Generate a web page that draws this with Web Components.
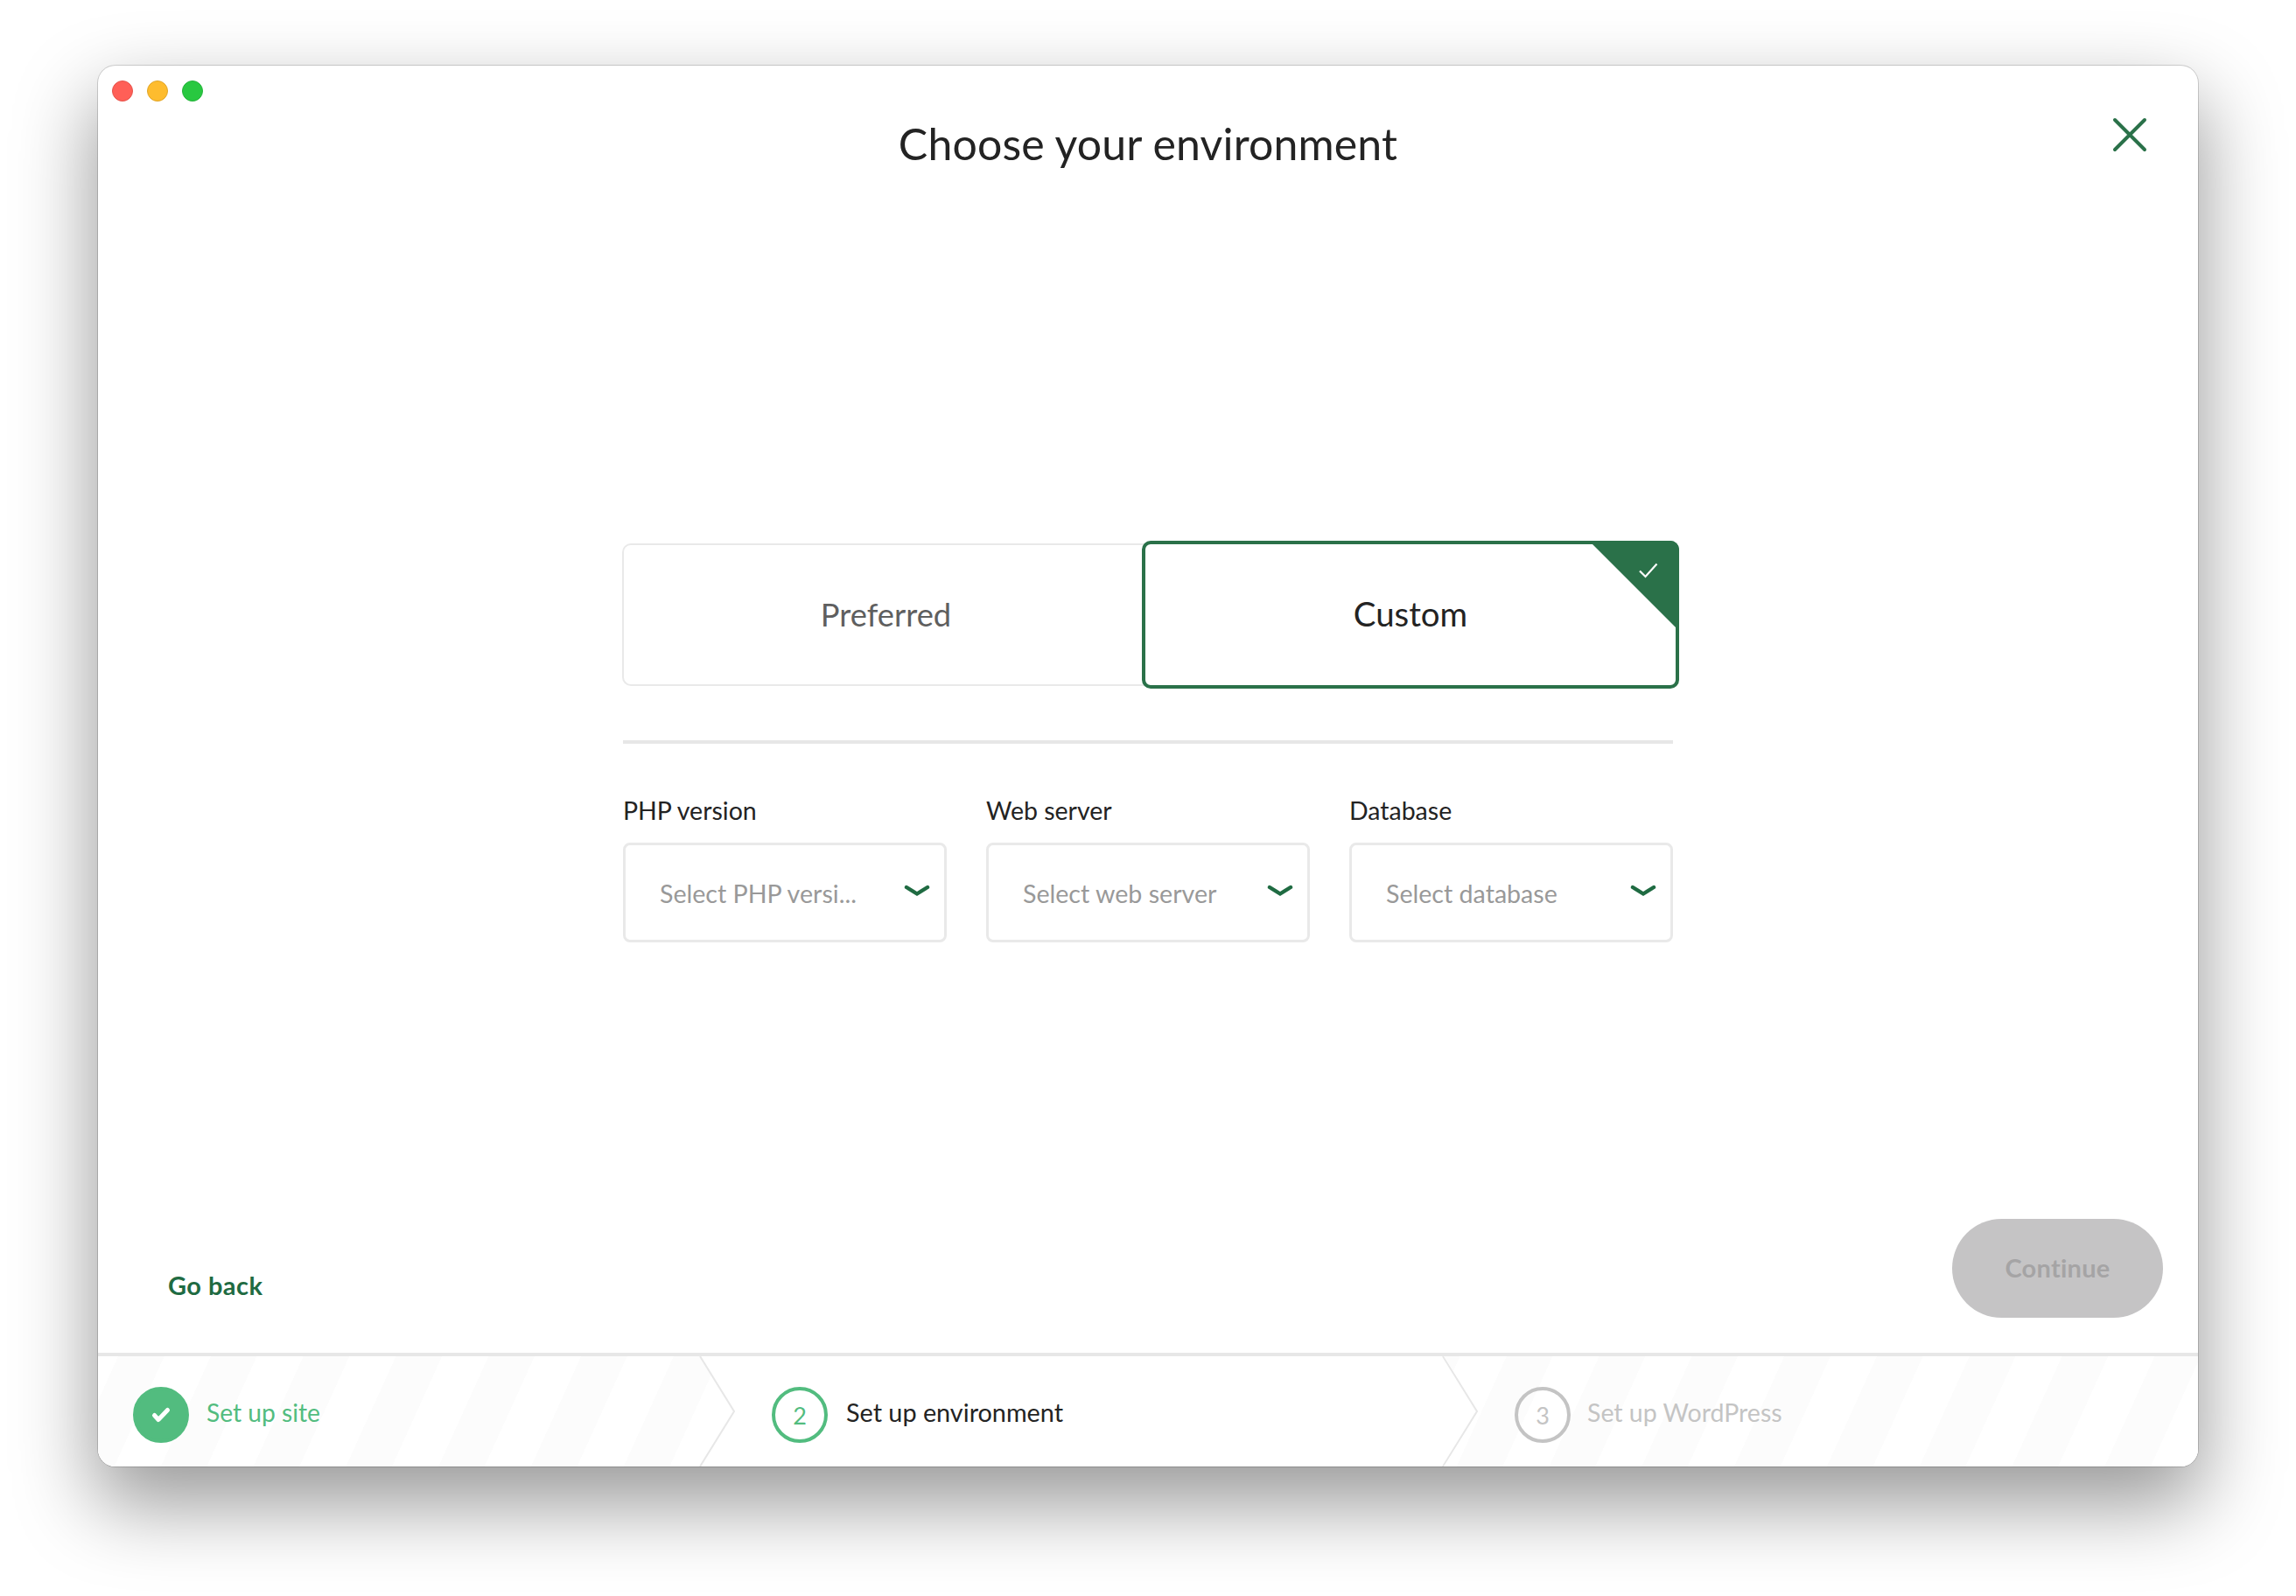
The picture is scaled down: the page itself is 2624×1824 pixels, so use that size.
<!DOCTYPE html>
<html lang="en">
<head>
<meta charset="utf-8">
<title>Choose your environment</title>
<style>
    html, body { margin: 0; padding: 0; background: #ffffff; }
    body { font-family: "Lato", "Liberation Sans", sans-serif; padding: 75px 112px 0; height: 1749px; }
</style>
</head>
<body>
<app-window>
    <traffic-lights></traffic-lights>
    <env-header>Choose your environment</env-header>
    <env-panel>
        <env-tabs>
            <env-tab>Preferred</env-tab>
            <env-tab selected>Custom</env-tab>
        </env-tabs>
        <env-fields>
            <select-field label="PHP version" placeholder="Select PHP versi..."></select-field>
            <select-field label="Web server" placeholder="Select web server"></select-field>
            <select-field label="Database" placeholder="Select database"></select-field>
        </env-fields>
    </env-panel>
    <action-row></action-row>
    <wizard-footer>
        <wizard-step state="done" width="729">Set up site</wizard-step>
        <wizard-step state="current" number="2" width="849">Set up environment</wizard-step>
        <wizard-step state="todo" number="3">Set up WordPress</wizard-step>
    </wizard-footer>
</app-window>

<script>
class AppWindow extends HTMLElement {
    constructor() {
        super();
        this.attachShadow({ mode: 'open' });
        this.shadowRoot.innerHTML = `
            <style>
                :host {
                    display: flex;
                    flex-direction: column;
                    position: relative;
                    width: 2400px;
                    height: 1601px;
                    background: #ffffff;
                    border-radius: 20px;
                    overflow: hidden;
                    box-shadow: 0 0 0 1px rgba(0, 0, 0, 0.16), 0 40px 90px 4px rgba(0, 0, 0, 0.4);
                }
            </style>
            <slot></slot>
        `;
    }
}

class TrafficLights extends HTMLElement {
    constructor() {
        super();
        this.attachShadow({ mode: 'open' });
        this.shadowRoot.innerHTML = `
            <style>
                :host {
                    position: absolute;
                    top: 17px;
                    left: 16px;
                    display: flex;
                    gap: 16px;
                }
                span {
                    width: 24px;
                    height: 24px;
                    border-radius: 50%;
                    box-sizing: border-box;
                }
                .red { background: #ff5f57; border: 1px solid #e5534b; }
                .amber { background: #febc2e; border: 1px solid #e0a528; }
                .green { background: #28c840; border: 1px solid #24b23a; }
            </style>
            <span class="red"></span>
            <span class="amber"></span>
            <span class="green"></span>
        `;
    }
}

class EnvHeader extends HTMLElement {
    constructor() {
        super();
        this.attachShadow({ mode: 'open' });
        this.shadowRoot.innerHTML = `
            <style>
                :host {
                    display: flex;
                    justify-content: center;
                    align-items: center;
                    position: relative;
                    height: 178px;
                    flex: none;
                    font-size: 50px;
                    letter-spacing: 0.15px;
                    color: #232323;
                }
                svg {
                    position: absolute;
                    top: 59px;
                    right: 58px;
                }
            </style>
            <slot></slot>
            <svg width="40" height="40" viewBox="0 0 40 40" fill="none" stroke="#2a7149" stroke-width="4" stroke-linecap="round">
                <path d="M3 3 L37 37 M37 3 L3 37"/>
            </svg>
        `;
    }
}

class EnvPanel extends HTMLElement {
    constructor() {
        super();
        this.attachShadow({ mode: 'open' });
        this.shadowRoot.innerHTML = `
            <style>
                :host {
                    display: block;
                    width: 1200px;
                    margin: 365px auto 0;
                    flex: none;
                }
            </style>
            <slot></slot>
        `;
    }
}

class EnvTabs extends HTMLElement {
    constructor() {
        super();
        this.attachShadow({ mode: 'open' });
        this.shadowRoot.innerHTML = `
            <style>
                :host {
                    display: flex;
                    width: 1207px;
                    height: 169px;
                    padding-bottom: 59px;
                    position: relative;
                }
                .rule {
                    position: absolute;
                    left: 0;
                    bottom: -4px;
                    width: 1200px;
                    height: 4px;
                    background: #e7e7e7;
                }
            </style>
            <slot></slot>
            <div class="rule"></div>
        `;
    }
}

class EnvTab extends HTMLElement {
    constructor() {
        super();
        this.attachShadow({ mode: 'open' });
        this.shadowRoot.innerHTML = `
            <style>
                :host {
                    display: flex;
                    justify-content: center;
                    align-items: center;
                    box-sizing: border-box;
                    position: relative;
                    width: 601px;
                    height: 163px;
                    margin: 3px 0 3px -1px;
                    padding-bottom: 2px;
                    border: 2px solid #e9e9e9;
                    border-right: 0;
                    border-radius: 10px 0 0 10px;
                    font-size: 36.3px;
                    color: #5f5f5f;
                }
                :host([selected]) {
                    width: 614px;
                    height: 169px;
                    margin: 0 0 0 -7px;
                    padding-bottom: 3px;
                    border: 4px solid #2a7149;
                    border-radius: 10px;
                    font-size: 38.4px;
                    color: #232323;
                    background: #ffffff;
                }
                .corner {
                    display: none;
                    position: absolute;
                    top: -4px;
                    right: -4px;
                    width: 103px;
                    height: 103px;
                    background: #2a7149;
                    border-top-right-radius: 10px;
                    clip-path: polygon(0 0, 100% 0, 100% 100%);
                }
                :host([selected]) .corner { display: block; }
                svg { position: absolute; top: 25px; right: 24px; }
            </style>
            <slot></slot>
            <div class="corner">
                <svg width="23" height="18" viewBox="0 0 23 18" fill="none" stroke="#ffffff" stroke-width="2.2">
                    <path d="M2 9.5 L8.5 16 L21.5 1.5"/>
                </svg>
            </div>
        `;
    }
}

class EnvFields extends HTMLElement {
    constructor() {
        super();
        this.attachShadow({ mode: 'open' });
        this.shadowRoot.innerHTML = `
            <style>
                :host {
                    display: grid;
                    grid-template-columns: repeat(3, 370px);
                    column-gap: 45px;
                    padding-top: 63px;
                }
            </style>
            <slot></slot>
        `;
    }
}

class SelectField extends HTMLElement {
    constructor() {
        super();
        this.attachShadow({ mode: 'open' });
        this.shadowRoot.innerHTML = `
            <style>
                :host {
                    display: flex;
                    flex-direction: column;
                    gap: 18px;
                }
                label {
                    height: 36px;
                    line-height: 34px;
                    font-size: 28.5px;
                    color: #232323;
                }
                .box {
                    display: flex;
                    align-items: center;
                    justify-content: space-between;
                    box-sizing: border-box;
                    height: 114px;
                    padding: 2px 16px 0 39px;
                    border: 3px solid #e9e9e9;
                    border-radius: 8px;
                    font-size: 28.6px;
                    color: #999999;
                }
                svg { margin-top: -6px; }
            </style>
            <label></label>
            <div class="box">
                <span class="placeholder"></span>
                <svg width="30" height="14" viewBox="0 0 30 14" fill="none" stroke="#1f6b42" stroke-width="4.4" stroke-linecap="round">
                    <path d="M3 3 L15 10.5 L27 3"/>
                </svg>
            </div>
        `;
    }

    connectedCallback() {
        this.shadowRoot.querySelector('label').textContent = this.getAttribute('label');
        this.shadowRoot.querySelector('.placeholder').textContent = this.getAttribute('placeholder');
    }
}

class ActionRow extends HTMLElement {
    constructor() {
        super();
        this.attachShadow({ mode: 'open' });
        this.shadowRoot.innerHTML = `
            <style>
                :host {
                    display: flex;
                    justify-content: space-between;
                    align-items: flex-end;
                    flex: 1;
                    padding: 0 40px 40px 80px;
                }
                a {
                    margin-bottom: 19px;
                    line-height: 36px;
                    font-size: 29px;
                    font-weight: 700;
                    letter-spacing: 0.45px;
                    color: #1f6b42;
                }
                button {
                    width: 241px;
                    height: 113px;
                    padding: 0 0 3px;
                    border: 0;
                    border-radius: 57px;
                    background: #c5c4c5;
                    color: #a5a4a5;
                    font-family: inherit;
                    font-size: 29px;
                    font-weight: 700;
                    letter-spacing: 0.25px;
                }
            </style>
            <a>Go back</a>
            <button>Continue</button>
        `;
    }
}

class WizardFooter extends HTMLElement {
    constructor() {
        super();
        this.attachShadow({ mode: 'open' });
        this.shadowRoot.innerHTML = `
            <style>
                :host {
                    display: flex;
                    flex: none;
                    height: 126px;
                    border-top: 4px solid #e7e7e7;
                    background: #ffffff;
                }
            </style>
            <slot></slot>
        `;
    }
}

class WizardStep extends HTMLElement {
    constructor() {
        super();
        this.attachShadow({ mode: 'open' });
        const state = this.getAttribute('state');
        const number = this.getAttribute('number');
        const badge = state === 'done'
            ? `<svg width="32" height="32" viewBox="-16 -16 32 32" fill="none" stroke="#ffffff" stroke-width="5" stroke-linecap="round" stroke-linejoin="round">
                   <path d="M-7.5 0.5 L-3 5.5 L7.5 -5.5"/>
               </svg>`
            : number;
        this.shadowRoot.innerHTML = `
            <style>
                :host {
                    display: flex;
                    align-items: center;
                    gap: 21px;
                    position: relative;
                    box-sizing: border-box;
                    height: 126px;
                    padding: 8px 0 0 41px;
                    font-size: 28.8px;
                    color: #232323;
                    flex: none;
                }
                :host([state="done"]) { padding-left: 40px; gap: 20px; color: #52bc7f; font-size: 28.2px; }
                :host([state="todo"]) {
                    flex: 1;
                    margin-left: -40px;
                    padding-left: 81px;
                    gap: 19px;
                    font-size: 28.5px;
                    color: #c4c4c4;
                }
                .stripes {
                    display: none;
                    position: absolute;
                    inset: 0;
                    background: repeating-linear-gradient(114.4deg,
                        #ffffff var(--phase), #fcfcfc var(--phase),
                        #fcfcfc calc(var(--phase) + 48px), #ffffff calc(var(--phase) + 48px),
                        #ffffff calc(var(--phase) + 96.35px));
                }
                :host([state="done"]) .stripes {
                    display: block;
                    --phase: 21px;
                    clip-path: polygon(0 0, 689px 0, 729px 50%, 689px 100%, 0 100%);
                }
                :host([state="todo"]) .stripes {
                    display: block;
                    --phase: -31px;
                    clip-path: polygon(0 0, 100% 0, 100% 100%, 0 100%, 40px 50%);
                }
                .badge, .label { position: relative; }
                .badge {
                    display: flex;
                    justify-content: center;
                    align-items: center;
                    box-sizing: border-box;
                    width: 64px;
                    height: 64px;
                    border-radius: 50%;
                    border: 4px solid #52bc7f;
                    color: #52bc7f;
                    font-size: 27px;
                    flex: none;
                }
                :host([state="done"]) .badge { background: #52bc7f; }
                :host([state="todo"]) .badge { border-color: #c4c4c4; color: #c4c4c4; }
                .label { top: -3px; }
                .arrow { position: absolute; top: 0; right: 0; }
                :host([state="todo"]) .arrow { display: none; }
            </style>
            <div class="stripes"></div>
            <span class="badge">${badge}</span>
            <span class="label"><slot></slot></span>
            <svg class="arrow" width="42" height="126" viewBox="0 0 42 126" fill="none" stroke="#e7e7e7" stroke-width="2">
                <path d="M1 0 L40 63 L1 126"/>
            </svg>
        `;
        const width = this.getAttribute('width');
        if (width) this.style.width = width + 'px';
    }
}

customElements.define('app-window', AppWindow);
customElements.define('traffic-lights', TrafficLights);
customElements.define('env-header', EnvHeader);
customElements.define('env-panel', EnvPanel);
customElements.define('env-tabs', EnvTabs);
customElements.define('env-tab', EnvTab);
customElements.define('env-fields', EnvFields);
customElements.define('select-field', SelectField);
customElements.define('action-row', ActionRow);
customElements.define('wizard-footer', WizardFooter);
customElements.define('wizard-step', WizardStep);
</script>
</body>
</html>
